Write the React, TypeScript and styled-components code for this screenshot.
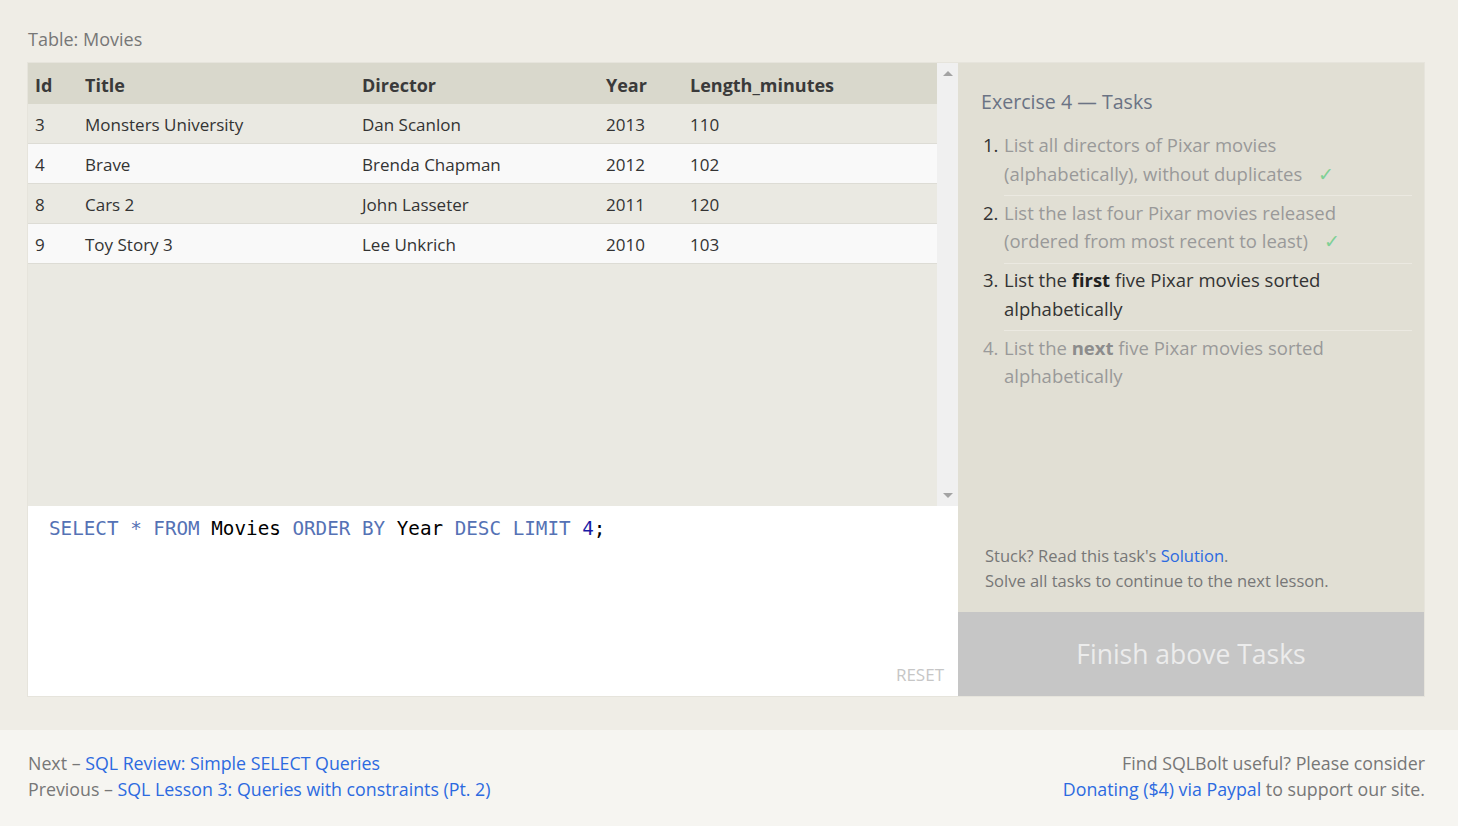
import React from 'react';
import styled, { createGlobalStyle } from 'styled-components';

const GlobalStyle = createGlobalStyle`
  html, body {
    margin: 0;
    padding: 0;
    background: #efede6;
  }
  body {
    font-family: 'Open Sans', 'Noto Sans', sans-serif;
    color: #333;
  }
`;

const Page = styled.div`
  width: 1458px;
  min-height: 826px;
  display: flex;
  flex-direction: column;
`;

const Main = styled.div`
  background: #efede6;
  padding: 27px 34px 34px 28px;
`;

const TableLabel = styled.div`
  font-size: 18px;
  color: #777;
  line-height: 24px;
  margin-bottom: 12px;
`;

const Widget = styled.div`
  display: flex;
  border: 1px solid #e6e4dc;
  margin: -1px;
`;

const LeftCol = styled.div`
  width: 930px;
  display: flex;
  flex-direction: column;
`;

const Viewer = styled.div`
  height: 443px;
  display: flex;
  background: #eae9e2;
`;

const TableWrap = styled.div`
  flex: 1;
`;

const Table = styled.table`
  width: 100%;
  table-layout: fixed;
  border-collapse: collapse;
  font-size: 17px;
  color: #333;
`;

const Th = styled.th<{ w?: number }>`
  box-sizing: border-box;
  width: ${p => (p.w ? `${p.w}px` : 'auto')};
  height: 41px;
  padding: 2px 0 0 7px;
  text-align: left;
  font-weight: 700;
  font-size: 18px;
  background: #d9d8cc;
  color: #3a3a3a;
`;

const Tr = styled.tr<{ light: boolean }>`
  background: ${p => (p.light ? '#f9f9f9' : '#eae9e2')};
  border-bottom: 1px solid #dddcd5;
`;

const Td = styled.td`
  height: 37px;
  padding: 2px 0 0 7px;
`;

const ScrollTrack = styled.div`
  width: 21px;
  background: #f0f0f0;
  display: flex;
  flex-direction: column;
  justify-content: space-between;
  align-items: center;
  padding: 8px 0;
`;

const Arrow = styled.div<{ down?: boolean }>`
  width: 0;
  height: 0;
  border-left: 5px solid transparent;
  border-right: 5px solid transparent;
  ${p =>
    p.down
      ? 'border-top: 5px solid #a3a3a3;'
      : 'border-bottom: 5px solid #a3a3a3;'}
`;

const Editor = styled.div`
  height: 190px;
  background: #fff;
  position: relative;
  padding: 11px 21px;
  box-sizing: border-box;
`;

const Code = styled.div`
  font-family: 'DejaVu Sans Mono', 'Liberation Mono', monospace;
  font-size: 19.25px;
  line-height: 24px;
  color: #000;
  white-space: pre;
`;

const Kw = styled.span`
  color: #5572b5;
`;

const Num = styled.span`
  color: #1a1aa6;
`;

const Reset = styled.div`
  position: absolute;
  right: 14px;
  bottom: 10px;
  font-size: 17px;
  color: #c6c6c6;
`;

const RightCol = styled.div`
  width: 466px;
  display: flex;
  flex-direction: column;
`;

const TasksPanel = styled.div`
  height: 549px;
  box-sizing: border-box;
  background: #e1dfd4;
  padding: 26px 12px 0 23px;
  display: flex;
  flex-direction: column;
`;

const Heading = styled.div`
  font-size: 19.6px;
  line-height: 26px;
  color: #6b7384;
  margin-bottom: 16px;
`;

const TaskList = styled.div`
  display: flex;
  flex-direction: column;
`;

const TaskRow = styled.div`
  display: flex;
`;

const TaskNum = styled.div<{ muted: boolean }>`
  width: 21px;
  padding-left: 2px;
  font-size: 18.5px;
  line-height: 28.5px;
  color: ${p => (p.muted ? '#9a9a9a' : '#333')};
`;

const TaskText = styled.div<{ tone: 'done' | 'current' | 'todo' }>`
  flex: 1;
  font-size: 18.5px;
  line-height: 28.5px;
  padding: 0 20px 7px 0;
  margin-bottom: 2.5px;
  color: ${p => (p.tone === 'current' ? '#333' : '#999')};
  border-bottom: 1px solid ${p => (p.tone === 'todo' ? 'transparent' : '#ebe9e1')};
  b {
    color: ${p => (p.tone === 'current' ? '#222' : '#8c8c8c')};
  }
`;

const Check = styled.span`
  color: #7fd095;
  margin-left: 16px;
`;

const Hint = styled.div`
  margin: auto 0 19px 4px;
  font-size: 16.5px;
  line-height: 25px;
  color: #777;
`;

const Link = styled.a`
  color: #2c6ae0;
  text-decoration: none;
`;

const FinishButton = styled.div`
  height: 84px;
  background: #c6c6c6;
  color: #ececec;
  font-size: 26.5px;
  display: flex;
  align-items: center;
  justify-content: center;
`;

const Footer = styled.div`
  flex: 1;
  background: #f6f5f1;
  padding: 20px 33px 0 28px;
  display: flex;
  justify-content: space-between;
  font-size: 17.8px;
  line-height: 26px;
  color: #777;
`;

const FooterRight = styled.div`
  text-align: right;
`;

const movies = [
  { id: 3, title: 'Monsters University', director: 'Dan Scanlon', year: 2013, len: 110 },
  { id: 4, title: 'Brave', director: 'Brenda Chapman', year: 2012, len: 102 },
  { id: 8, title: 'Cars 2', director: 'John Lasseter', year: 2011, len: 120 },
  { id: 9, title: 'Toy Story 3', director: 'Lee Unkrich', year: 2010, len: 103 },
];

const App: React.FC = () => {
  return (
    <Page>
      <GlobalStyle />
      <Main>
        <TableLabel>Table: Movies</TableLabel>
        <Widget>
          <LeftCol>
            <Viewer>
              <TableWrap>
                <Table>
                  <thead>
                    <tr>
                      <Th w={50}>Id</Th>
                      <Th w={277}>Title</Th>
                      <Th w={244}>Director</Th>
                      <Th w={84}>Year</Th>
                      <Th>Length_minutes</Th>
                    </tr>
                  </thead>
                  <tbody>
                    {movies.map((m, i) => (
                      <Tr key={m.id} light={i % 2 === 1}>
                        <Td>{m.id}</Td>
                        <Td>{m.title}</Td>
                        <Td>{m.director}</Td>
                        <Td>{m.year}</Td>
                        <Td>{m.len}</Td>
                      </Tr>
                    ))}
                  </tbody>
                </Table>
              </TableWrap>
              <ScrollTrack>
                <Arrow />
                <Arrow down />
              </ScrollTrack>
            </Viewer>
            <Editor>
              <Code>
                <Kw>SELECT</Kw> <Kw>*</Kw> <Kw>FROM</Kw> Movies <Kw>ORDER</Kw> <Kw>BY</Kw> Year{' '}
                <Kw>DESC</Kw> <Kw>LIMIT</Kw> <Num>4</Num>;
              </Code>
              <Reset>RESET</Reset>
            </Editor>
          </LeftCol>
          <RightCol>
            <TasksPanel>
              <Heading>Exercise 4 — Tasks</Heading>
              <TaskList>
                <TaskRow>
                  <TaskNum muted={false}>1.</TaskNum>
                  <TaskText tone="done">
                    List all directors of Pixar movies (alphabetically), without duplicates
                    <Check>✓</Check>
                  </TaskText>
                </TaskRow>
                <TaskRow>
                  <TaskNum muted={false}>2.</TaskNum>
                  <TaskText tone="done">
                    List the last four Pixar movies released (ordered from most recent to least)
                    <Check>✓</Check>
                  </TaskText>
                </TaskRow>
                <TaskRow>
                  <TaskNum muted={false}>3.</TaskNum>
                  <TaskText tone="current">
                    List the <b>first</b> five Pixar movies sorted alphabetically
                  </TaskText>
                </TaskRow>
                <TaskRow>
                  <TaskNum muted>4.</TaskNum>
                  <TaskText tone="todo">
                    List the <b>next</b> five Pixar movies sorted alphabetically
                  </TaskText>
                </TaskRow>
              </TaskList>
              <Hint>
                Stuck? Read this task's <Link href="#">Solution</Link>.
                <br />
                Solve all tasks to continue to the next lesson.
              </Hint>
            </TasksPanel>
            <FinishButton>Finish above Tasks</FinishButton>
          </RightCol>
        </Widget>
      </Main>
      <Footer>
        <div>
          Next – <Link href="#">SQL Review: Simple SELECT Queries</Link>
          <br />
          Previous – <Link href="#">SQL Lesson 3: Queries with constraints (Pt. 2)</Link>
        </div>
        <FooterRight>
          Find SQLBolt useful? Please consider
          <br />
          <Link href="#">Donating ($4) via Paypal</Link> to support our site.
        </FooterRight>
      </Footer>
    </Page>
  );
};

export default App;
